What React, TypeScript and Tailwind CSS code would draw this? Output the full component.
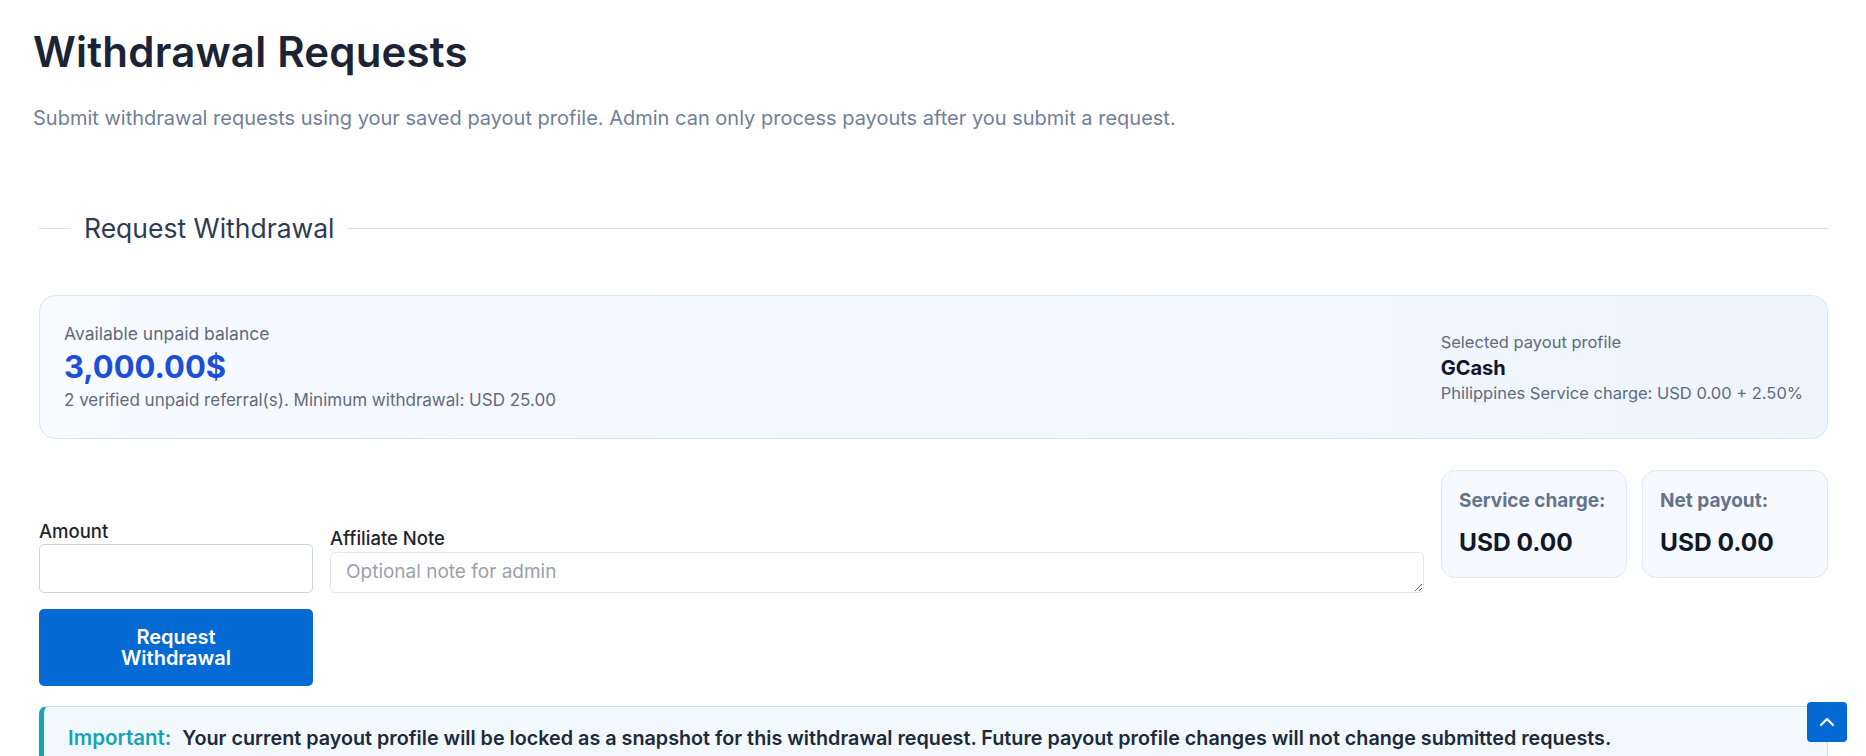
import { ChevronUp } from "lucide-react";

const FONT = { fontFamily: "Inter, 'Noto Sans', sans-serif" };

function BalanceCard() {
  return (
    <div className="mt-[51px] flex h-[144px] items-center justify-between rounded-[16px] border border-[#d8e6f8] bg-gradient-to-r from-[#f7faff] to-[#eef5fe] pl-[24px] pr-[24px]">
      <div>
        <div className="text-[17.5px] leading-[22px] text-[#5f6b7c]">Available unpaid balance</div>
        <div className="mt-[2px] text-[31px] font-bold leading-[40px] text-[#1d4ed8]">3,000.00$</div>
        <div className="mt-[2px] text-[17px] leading-[22px] text-[#5f6b7c]">
          2 verified unpaid referral(s). Minimum withdrawal: USD 25.00
        </div>
      </div>
      <div>
        <div className="text-[16.5px] leading-[22px] text-[#5f6b7c]">Selected payout profile</div>
        <div className="mt-[2px] text-[20px] font-bold leading-[26px] text-[#0f172a]">GCash</div>
        <div className="mt-[1px] text-[16.5px] leading-[22px] text-[#5f6b7c]">
          Philippines Service charge: USD 0.00 + 2.50%
        </div>
      </div>
    </div>
  );
}

function StatCard({ label, value }: { label: string; value: string }) {
  return (
    <div className="w-[186px] rounded-[14px] border border-[#dbe7fb] bg-[#f6f9ff] px-[17px] pt-[18px] pb-[19px]">
      <div className="text-[19px] font-bold leading-[24px] text-[#64748b]">{label}</div>
      <div className="mt-[13px] text-[24.5px] font-bold leading-[32px] text-[#111827]">{value}</div>
    </div>
  );
}

export default function App() {
  return (
    <div className="relative min-h-screen overflow-hidden bg-white pl-[33px] pr-[38px] pt-[28px]" style={FONT}>
      <h1 className="text-[42px] font-semibold leading-[48px] tracking-[0.2px] text-[#1b2436]">
        Withdrawal Requests
      </h1>
      <p className="mt-[28px] text-[20px] leading-[28px] text-[#718096]">
        Submit withdrawal requests using your saved payout profile. Admin can only process payouts after you
        submit a request.
      </p>

      <div className="pl-[6px]">
        <div className="mt-[80px] flex items-center">
          <span className="h-px w-[32px] bg-[#dee2e6]" />
          <span className="px-[13px] text-[26.5px] leading-[32px] text-[#2d3c54]">Request Withdrawal</span>
          <span className="h-px flex-1 bg-[#dee2e6]" />
        </div>

        <BalanceCard />

        <div className="mt-[31px] flex items-end gap-[17px]">
          <div className="w-[274px]">
            <label className="block text-[18.5px] font-medium leading-[24px] text-[#1f2430]">Amount</label>
            <input
              type="text"
              className="mt-[1px] block h-[49px] w-full rounded-[5px] border border-[#ced4da] bg-white px-4 outline-none"
            />
          </div>
          <div className="flex-1">
            <label className="block text-[18.5px] font-medium leading-[24px] text-[#1f2430]">Affiliate Note</label>
            <textarea
              rows={1}
              placeholder="Optional note for admin"
              className="mt-[2px] block h-[41px] w-full rounded-[5px] border border-[#e2e8f0] bg-white px-[15px] py-[6px] text-[19px] leading-[26px] text-[#1f2430] outline-none placeholder:text-[#9aa1ad]"
            />
          </div>
          <div className="mb-[15px] flex gap-[15px]">
            <StatCard label="Service charge:" value="USD 0.00" />
            <StatCard label="Net payout:" value="USD 0.00" />
          </div>
        </div>

        <button className="mt-[16px] h-[77px] w-[274px] rounded-[5px] bg-[#066ad4] text-[20px] font-semibold leading-[21px] text-white">
          Request
          <br />
          Withdrawal
        </button>

        <div className="mt-[20px] rounded-[8px] border border-l-[5px] border-[#b9e6f7] border-l-[#17a2b8] bg-[#f1f9fd] pl-[24px] pt-[18px] pb-[18px]">
          <p className="text-[19.75px] font-semibold leading-[26px] text-[#1e293b]">
            <span className="mr-[11px] text-[20.5px] text-[#17a2b8]">Important:</span>
            Your current payout profile will be locked as a snapshot for this withdrawal request. Future payout
            profile changes will not change submitted requests.
          </p>
        </div>
      </div>

      <button className="absolute right-[19px] top-[702px] flex h-[40px] w-[40px] items-center justify-center rounded-[4px] bg-[#0569d3] text-white">
        <ChevronUp size={24} strokeWidth={2.25} />
      </button>
    </div>
  );
}
